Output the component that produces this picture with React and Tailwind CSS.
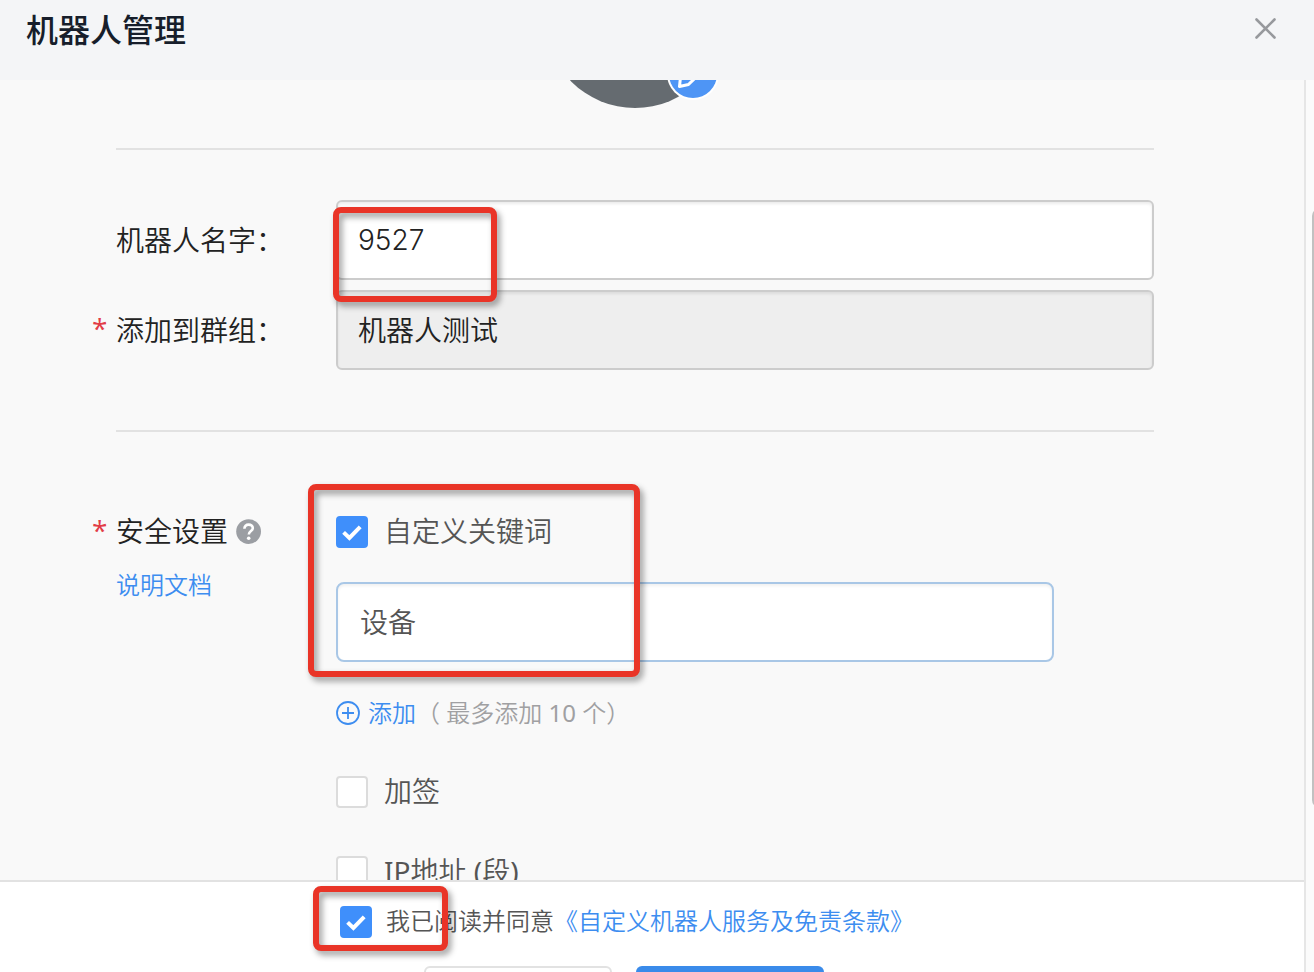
import { useState } from "react";

function Checkbox({ id, defaultChecked = false }) {
  return (
    <span className="grid size-8 shrink-0">
      <input
        id={id}
        type="checkbox"
        defaultChecked={defaultChecked}
        className="peer col-start-1 row-start-1 size-8 appearance-none rounded-[4px] border-2 border-[#dcdcdc] bg-white checked:border-[#3f8ffb] checked:bg-[#3f8ffb]"
      />
      <svg
        viewBox="0 0 32 32"
        className="pointer-events-none col-start-1 row-start-1 hidden size-8 peer-checked:block"
        fill="none"
        stroke="#fff"
        strokeWidth="4"
        aria-hidden="true"
      >
        <path d="M7.6 16.4L13.4 22L24.2 10.8" />
      </svg>
    </span>
  );
}

function Highlight({ className }) {
  return (
    <div
      aria-hidden="true"
      className={`pointer-events-none absolute rounded-[8px] border-6 border-[#e93427] drop-shadow-[3px_4px_3px_rgba(0,0,0,0.4)] ${className}`}
    />
  );
}

function Star({ show = true }) {
  return (
    <span className="h-8 w-6 shrink-0 font-['Open_Sans',sans-serif] text-[28px] leading-7 font-normal text-[#e23c46]">
      {show ? "*" : ""}
    </span>
  );
}

const fieldClass =
  "h-20 w-full rounded-[6px] border-2 border-[#cccccc] px-5 text-[28px] text-[#222] shadow-[inset_0_2px_3px_rgba(0,0,0,0.08)] outline-none";

const latinClass = "font-['Noto_Sans',sans-serif] font-normal";

export default function App() {
  const [name, setName] = useState("9527");
  const [keyword, setKeyword] = useState("设备");

  return (
    <div className="flex h-screen flex-col overflow-hidden bg-[#f9f9f9] font-['Noto_Sans_CJK_SC',sans-serif] font-[350] text-[#222]">
      <header className="flex h-20 shrink-0 items-start justify-between bg-[#f4f5f7] pt-2 pr-9 pl-[26px]">
        <h1 className="text-[32px] leading-10 font-medium text-[#171e2b]">机器人管理</h1>
        <button type="button" aria-label="关闭" className="mt-2 flex size-6 items-center justify-center">
          <svg viewBox="0 0 24 24" className="size-6" fill="none" stroke="#97999d" strokeWidth="2.6" strokeLinecap="round">
            <path d="M2.5 3.5L20.5 21.5M20.5 3.5L2.5 21.5" />
          </svg>
        </button>
      </header>

      <div className="flex min-h-0 flex-1">
        <div className="flex min-w-0 flex-1 flex-col">
          <main className="min-h-0 flex-1 overflow-hidden pr-[150px] pl-[92px]">
            <div className="-mt-[152px] ml-6 flex justify-center border-b-2 border-[#e2e2e2] pb-10">
              <div className="relative size-[180px] rounded-full bg-[#656b70]">
                <button
                  type="button"
                  aria-label="编辑头像"
                  className="absolute right-2 bottom-[10px] size-12 rounded-full bg-[#4e95f5] ring-2 ring-white"
                >
                  <svg viewBox="0 0 48 48" className="size-12" fill="none" stroke="#fff" strokeWidth="3" strokeLinejoin="round">
                    <path d="M11.5 27L27 7.5L38 16.5L19.5 34.5L10.5 36.5Z" />
                  </svg>
                </button>
              </div>
            </div>

            <div className="flex flex-col gap-[10px] pt-[50px] pb-[60px]">
              <div className="relative flex items-center">
                <Star show={false} />
                <label htmlFor="robot-name" className="w-[220px] shrink-0 pb-[2px] text-[28px]">
                  机器人名字：
                </label>
                <input
                  id="robot-name"
                  value={name}
                  onChange={(e) => setName(e.target.value)}
                  className={`${fieldClass} bg-white font-['Inter',sans-serif]`}
                />
                <Highlight className="top-[7px] left-[241px] z-10 h-[95px] w-[164px]" />
              </div>
              <div className="flex items-center">
                <Star />
                <label htmlFor="robot-group" className="w-[220px] shrink-0 pb-[2px] text-[28px]">
                  添加到群组：
                </label>
                <input id="robot-group" readOnly value="机器人测试" className={`${fieldClass} bg-[#eeeeee] pb-[2px]`} />
              </div>
            </div>

            <hr className="ml-6 border-t-2 border-[#e2e2e2]" />

            <div className="flex pt-[84px]">
              <Star />
              <div className="flex w-[220px] shrink-0 flex-col gap-3">
                <div className="flex h-8 items-center gap-2">
                  <span className="pb-1 text-[28px]">安全设置</span>
                  <button type="button" aria-label="帮助">
                    <svg viewBox="0 0 26 26" className="size-[26px]" fill="none">
                      <circle cx="12.6" cy="12.6" r="12.4" fill="#9b9ea3" />
                      <path
                        d="M8.4 9.8C8.4 7.2 10.2 5.6 12.6 5.6C15 5.6 16.8 7.1 16.8 9.2C16.8 12 12.8 12.2 12.8 15.6"
                        stroke="#fff"
                        strokeWidth="2.6"
                      />
                      <circle cx="12.7" cy="19.3" r="1.8" fill="#fff" />
                    </svg>
                  </button>
                </div>
                <a href="#docs" className="self-start text-[24px] leading-[48px] text-[#3d8df0]">
                  说明文档
                </a>
              </div>

              <div className="min-w-0 flex-1 text-[28px] text-[#555]">
                <div className="relative mr-[100px]">
                  <div className="flex h-8 items-center gap-4">
                    <Checkbox id="use-keyword" defaultChecked />
                    <label htmlFor="use-keyword" className="pb-1">
                      自定义关键词
                    </label>
                  </div>
                  <input
                    aria-label="自定义关键词"
                    value={keyword}
                    onChange={(e) => setKeyword(e.target.value)}
                    className="mt-[34px] block h-20 w-full rounded-[8px] border-2 border-[#a9c7e6] bg-white px-[22px] pb-[2px] shadow-[inset_0_2px_3px_rgba(0,0,0,0.06)] outline-none"
                  />
                  <Highlight className="-top-8 -left-7 h-[193px] w-[332px]" />
                </div>

                <div className="mt-[34px] flex h-[34px] items-center text-[24px] leading-8">
                  <button type="button" className="flex items-center gap-2 text-[#3d8df0]">
                    <svg viewBox="0 0 24 24" className="size-6" fill="none" stroke="#3d8df0" strokeWidth="1.8">
                      <circle cx="12" cy="12" r="11" />
                      <path d="M12 6V18M6 12H18" />
                    </svg>
                    <span className="pb-[2px]">添加</span>
                  </button>
                  <span className="pb-[2px] text-[#a0a0a2]">
                    （<span className={latinClass}> </span>最多添加<span className={latinClass}> 10 </span>个）
                  </span>
                </div>

                <div className="mt-[46px] flex h-8 items-center gap-4">
                  <Checkbox id="use-sign" />
                  <label htmlFor="use-sign" className="pb-1">
                    加签
                  </label>
                </div>
                <div className="mt-12 flex h-8 items-center gap-4">
                  <Checkbox id="use-ip" />
                  <label htmlFor="use-ip" className="pb-1">
                    <span className={latinClass}>IP</span>地址<span className={latinClass}> (</span>段
                    <span className={latinClass}>)</span>
                  </label>
                </div>
              </div>
            </div>
          </main>

          <footer className="h-[92px] shrink-0 overflow-hidden border-t-2 border-[#e2e2e2] bg-white">
            <div className="flex justify-center pt-6 pr-[50px]">
              <div className="relative flex h-8 items-center gap-[14px] text-[24px] text-[#555]">
                <Checkbox id="agree" defaultChecked />
                <span className="pb-1">
                  <label htmlFor="agree">我已阅读并同意</label>
                  <a href="#terms" className="text-[#3d8df0]">
                    《自定义机器人服务及免责条款》
                  </a>
                </span>
                <Highlight className="-top-5 -left-[27px] h-[65px] w-[135px]" />
              </div>
            </div>
            <div className="mt-7 flex justify-center gap-6 pr-14">
              <button type="button" aria-label="取消" className="h-16 w-[188px] rounded-[6px] border-2 border-[#e2e2e2] bg-white" />
              <button type="button" aria-label="完成" className="h-16 w-[188px] rounded-[6px] bg-[#3a8bea]" />
            </div>
          </footer>
        </div>

        <div className="flex w-[10px] shrink-0 overflow-hidden border-l-2 border-[#e6e6e6] bg-[#fbfbfb] pt-32">
          <div className="ml-[6px] h-[600px] w-4 shrink-0 rounded-[8px] bg-[#c1c1c1]" />
        </div>
      </div>
    </div>
  );
}
